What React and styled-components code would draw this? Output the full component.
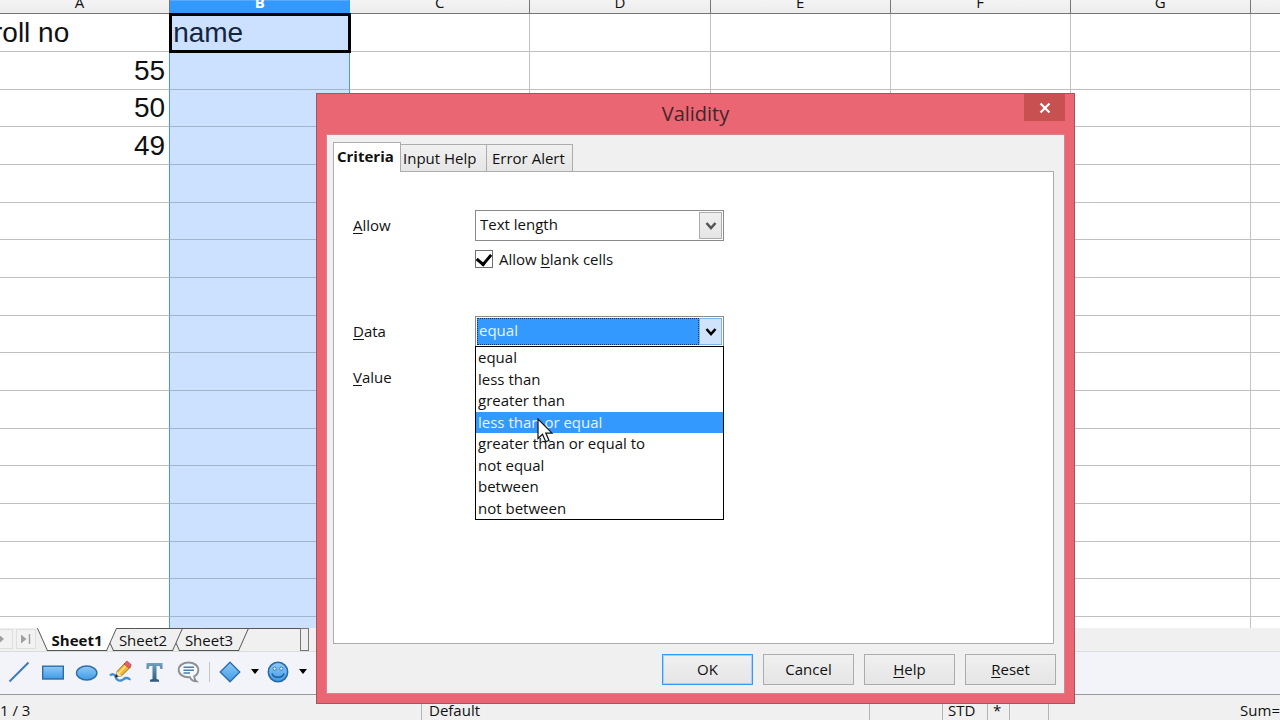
import React, { useState } from "react";
import styled, { createGlobalStyle, css } from "styled-components";

const columns = ["A", "B", "C", "D", "E", "F", "G", "H"];

const rows = [
  ["roll no", "name"],
  [55],
  [50],
  [49],
  ...Array.from({ length: 13 }, () => []),
];

const sheets = ["Sheet1", "Sheet2", "Sheet3"];

const tabs = ["Criteria", "Input Help", "Error Alert"];

const conditions = [
  "equal",
  "less than",
  "greater than",
  "less than or equal",
  "greater than or equal to",
  "not equal",
  "between",
  "not between",
];

const App = () => {
  return (
    <StPage>
      <GlobalStyle />
      <Spreadsheet />
      <SheetBar />
      <DrawingBar />
      <StatusBar />
      <ValidityDialog />
    </StPage>
  );
};

export default App;

const Spreadsheet = () => (
  <StSheet>
    <StTable>
      <thead>
        <tr>
          {columns.map((name) => (
            <StHead key={name} $selected={name === "B"}>
              <div>{name}</div>
            </StHead>
          ))}
        </tr>
      </thead>
      <tbody>
        {rows.map((row, rowIndex) => (
          <StRow key={rowIndex}>
            {columns.map((name, index) => (
              <StCell
                key={name}
                $selected={name === "B"}
                $beforeSelected={name === "A"}
                $active={name === "B" && rowIndex === 0}
                $number={typeof row[index] === "number"}
              >
                {row[index]}
              </StCell>
            ))}
          </StRow>
        ))}
      </tbody>
    </StTable>
  </StSheet>
);

const SheetBar = () => {
  const [current, setCurrent] = useState("Sheet1");

  return (
    <StSheetBar>
      <StNavButton type="button" aria-label="Next sheet">
        <svg width="16" height="16" viewBox="0 0 16 16">
          <path d="M4 3.5 9 8l-5 4.500z" fill="#a0a0a0" />
        </svg>
      </StNavButton>
      <StNavButton type="button" aria-label="Last sheet">
        <svg width="16" height="16" viewBox="0 0 16 16">
          <path d="M3 3.500 8.500 8 3 12.500z" fill="#a0a0a0" />
          <path d="M11.500 3v10" stroke="#a0a0a0" strokeWidth="1.500" />
        </svg>
      </StNavButton>
      <StSheetTabs>
        {sheets.map((name, index) => (
          <StSheetTab
            key={name}
            type="button"
            $active={name === current}
            $layer={sheets.length - index}
            onClick={() => setCurrent(name)}
          >
            <span>{name}</span>
          </StSheetTab>
        ))}
      </StSheetTabs>
      <StSplitter />
    </StSheetBar>
  );
};

const DrawingBar = () => (
  <StToolbar>
    <svg width="0" height="0" aria-hidden="true">
      <defs>
        <linearGradient id="blue" x1="0" y1="0" x2="0" y2="1">
          <stop offset="0" stopColor="#8fcaf5" />
          <stop offset="1" stopColor="#3f9be6" />
        </linearGradient>
        <linearGradient id="steel" x1="0" y1="0" x2="0" y2="1">
          <stop offset="0" stopColor="#6fa3c0" />
          <stop offset="1" stopColor="#2c5876" />
        </linearGradient>
      </defs>
    </svg>
    <StTool type="button" aria-label="Line">
      <svg width="24" height="24" viewBox="0 0 24 24">
        <path d="M2.500 21.500 21.500 2.500" stroke="#3d7cb4" strokeWidth="2" />
      </svg>
    </StTool>
    <StTool type="button" aria-label="Rectangle">
      <svg width="24" height="24" viewBox="0 0 24 24">
        <rect x="1.700" y="6.200" width="20.600" height="12.800" fill="url(#blue)" stroke="#2d6ca6" strokeWidth="1.400" />
      </svg>
    </StTool>
    <StTool type="button" aria-label="Ellipse">
      <svg width="24" height="24" viewBox="0 0 24 24">
        <ellipse cx="11.700" cy="13" rx="10.200" ry="7" fill="url(#blue)" stroke="#2d6ca6" strokeWidth="1.400" />
      </svg>
    </StTool>
    <StTool type="button" aria-label="Freeform line">
      <svg width="24" height="24" viewBox="0 0 24 24">
        <path d="M1 15.500c2-2 5-1.500 5.500 1s2.500 4.500 5.500 4 2.500-2.500 5.500-2.500 1.500 1.500 4 1" fill="none" stroke="#3d8fd6" strokeWidth="2.400" />
        <path d="m6.500 17 1.500-5.500L16 3l5.500 4.200-9 8.600z" fill="#f4b62c" stroke="#8a5a1c" strokeWidth=".8" />
        <path d="m9.700 13.500 8-8.500" stroke="#ffe48a" strokeWidth="1.800" />
        <path d="m15 4 2-2.200c.6-.6 1.300-.6 2 0l2.700 2.400c.6.6.6 1.300 0 2L19.800 8z" fill="#e4616a" stroke="#a83c46" strokeWidth=".7" />
        <path d="m6.500 17 1.500-5.500 4.500 4.300z" fill="#f3dfba" />
        <path d="m6 17.500 1-3.500 2.500 2.500z" fill="#222" />
      </svg>
    </StTool>
    <StTool type="button" aria-label="Text">
      <svg width="24" height="24" viewBox="0 0 24 24">
        <path d="M3.500 3h16v6h-2l-1-3h-3V19l2.500.7V21.800h-9v-2.100L9.500 19V6h-3l-1 3h-2z" fill="url(#steel)" />
      </svg>
    </StTool>
    <StTool type="button" aria-label="Callout">
      <svg width="24" height="24" viewBox="0 0 24 24">
        <path d="M11.500 2.500c5.700 0 9.800 3.200 9.800 7.400 0 3-1.600 5.200-4.100 6.500 0 1.800.8 3.600 2.300 5-3-.2-5.600-1.700-6.500-4.200h-1.500c-5.700 0-9.800-3.100-9.800-7.300s4.100-7.400 9.800-7.400z" fill="#f6f7f8" stroke="#8c9196" strokeWidth="1.900" />
        <path d="M6.500 7.200h10.500M6.500 10.200h10.500M6.500 13h6.500" stroke="#4a7fb4" strokeWidth="1.500" />
      </svg>
    </StTool>
    <StSeparator />
    <StTool type="button" aria-label="Basic shapes">
      <svg width="24" height="24" viewBox="0 0 24 24">
        <path d="M12 2.200 21.800 12 12 21.800 2.200 12z" fill="url(#blue)" stroke="#2d6ca6" strokeWidth="1.300" />
      </svg>
    </StTool>
    <StArrow type="button" aria-label="More basic shapes">
      <Triangle />
    </StArrow>
    <StTool type="button" aria-label="Symbol shapes">
      <svg width="24" height="24" viewBox="0 0 24 24">
        <circle cx="12" cy="12" r="9.700" fill="url(#blue)" stroke="#2468a8" strokeWidth="1.500" />
        <circle cx="8.700" cy="8.700" r="1.600" fill="#e4f3fd" stroke="#2468a8" strokeWidth=".8" />
        <circle cx="15.300" cy="8.700" r="1.600" fill="#e4f3fd" stroke="#2468a8" strokeWidth=".8" />
        <path d="M6 13.500c1.500 5 10.500 5 12 0" fill="none" stroke="#1d5c9a" strokeWidth="1.500" />
      </svg>
    </StTool>
    <StArrow type="button" aria-label="More symbol shapes">
      <Triangle />
    </StArrow>
  </StToolbar>
);

const StatusBar = () => (
  <StStatus>
    <StStatusItem $width={421}>1 / 3</StStatusItem>
    <StStatusItem $grow>Default</StStatusItem>
    <StStatusItem $width={73} />
    <StStatusItem $width={45}>STD</StStatusItem>
    <StStatusItem $width={22}>*</StStatusItem>
    <StStatusItem $width={39} />
    <StStatusItem $width={232} $right>
      Sum=
    </StStatusItem>
  </StStatus>
);

const ValidityDialog = () => {
  const [tab, setTab] = useState("Criteria");
  const [allow, setAllow] = useState("Text length");
  const [blank, setBlank] = useState(true);
  const [data, setData] = useState("equal");

  return (
    <StDialog role="dialog" aria-labelledby="dialog-title">
      <StTitle>
        <h1 id="dialog-title">Validity</h1>
        <StClose type="button" aria-label="Close">
          <svg width="12" height="12" viewBox="0 0 12 12">
            <path d="m1.500 1.500 9 9m0-9-9 9" stroke="#fff" strokeWidth="2.200" />
          </svg>
        </StClose>
      </StTitle>
      <StContent>
        <StTabs role="tablist">
          {tabs.map((name) => (
            <StTab
              key={name}
              type="button"
              role="tab"
              aria-selected={name === tab}
              $active={name === tab}
              onClick={() => setTab(name)}
            >
              {name}
            </StTab>
          ))}
        </StTabs>
        <StPanel role="tabpanel">
          <StField>
            <label htmlFor="allow">
              <u>A</u>llow
            </label>
            <StSelectBox>
              <StSelect id="allow" value={allow} onChange={(event) => setAllow(event.target.value)}>
                <option>Text length</option>
              </StSelect>
              <StSelectArrow>
                <Chevron color="#555" />
              </StSelectArrow>
            </StSelectBox>
          </StField>
          <StCheckField>
            <StCheckbox
              id="blank"
              type="checkbox"
              checked={blank}
              onChange={(event) => setBlank(event.target.checked)}
            />
            <label htmlFor="blank">
              Allow <u>b</u>lank cells
            </label>
          </StCheckField>
          <StField>
            <label htmlFor="data">
              <u>D</u>ata
            </label>
            <StSelectBox>
              <StSelect id="data" $open value={data} onChange={(event) => setData(event.target.value)}>
                {conditions.map((name) => (
                  <option key={name}>{name}</option>
                ))}
              </StSelect>
              <StSelectArrow $open>
                <Chevron color="#000" />
              </StSelectArrow>
              <StList role="listbox">
                {conditions.map((name) => (
                  <StOption
                    key={name}
                    role="option"
                    aria-selected={name === data}
                    $hover={name === "less than or equal"}
                    onClick={() => setData(name)}
                  >
                    {name}
                  </StOption>
                ))}
              </StList>
            </StSelectBox>
          </StField>
          <StField>
            <label htmlFor="value">
              <u>V</u>alue
            </label>
            <StInput id="value" type="text" />
          </StField>
        </StPanel>
        <StButtons>
          <StButton type="button" $primary>
            OK
          </StButton>
          <StButton type="button">Cancel</StButton>
          <StButton type="button">
            <u>H</u>elp
          </StButton>
          <StButton type="button">
            <u>R</u>eset
          </StButton>
        </StButtons>
      </StContent>
      <StCursor width="18" height="26" viewBox="0 0 18 26">
        <path d="M1 1v19.500l4.500-4.200 3.200 7.500 3.300-1.400-3.200-7.300H15z" fill="#fff" stroke="#111" strokeWidth="1.200" />
      </StCursor>
    </StDialog>
  );
};

const Chevron = ({ color }) => (
  <svg width="12" height="10" viewBox="0 0 12 10">
    <path d="m1.500 2 4.500 5 4.500-5" fill="none" stroke={color} strokeWidth="2.600" />
  </svg>
);

const Triangle = () => (
  <svg width="8" height="5" viewBox="0 0 8 5">
    <path d="M0 0h8L4 5z" fill="#000" />
  </svg>
);

const GlobalStyle = createGlobalStyle`
  * {
    box-sizing: border-box;
  }

  body {
    margin: 0;
    color: #111;
    font-family: "Open Sans", "Noto Sans", sans-serif;
    font-size: 15px;
    line-height: 20px;
  }

  button, input, select {
    font: inherit;
    color: inherit;
  }

  u {
    text-underline-offset: 2px;
  }
`;

const StPage = styled.div`
  position: relative;
  display: flex;
  flex-direction: column;
  height: 100vh;
  overflow: hidden;
  background: #fff;
`;

const StSheet = styled.div`
  flex: 1;
  min-height: 0;
  overflow: hidden;
`;

/* the first column is scrolled partly out of view */
const StTable = styled.table`
  table-layout: fixed;
  width: 1441px;
  margin-left: -10px;
  border-collapse: separate;
  border-spacing: 0;
`;

const StHead = styled.th`
  height: 14px;
  padding: 0;
  border-right: 1px solid #777;
  border-bottom: 1px solid #777;
  background: linear-gradient(#f4f4f4, #ececec);
  font-weight: 400;

  div {
    display: flex;
    align-items: flex-end;
    justify-content: center;
    height: 13px;
    padding-bottom: 1px;
    overflow: hidden;
  }

  ${({ $selected }) =>
    $selected &&
    css`
      background: linear-gradient(#5aa9f8 10%, #3399ff 10%);
      border-right-color: #3399ff;
      color: #fff;
      font-weight: 700;
    `}
`;

const StRow = styled.tr`
  height: 38px;

  &:nth-child(3n) {
    height: 37px;
  }
`;

const StCell = styled.td`
  padding: 0 4px 0 3px;
  border-right: 1px solid #c4c4c4;
  border-bottom: 1px solid #c0c0c0;
  font-family: "Liberation Sans", Arial, sans-serif;
  font-size: 28px;
  line-height: 32px;
  text-align: ${({ $number }) => ($number ? "right" : "left")};
  white-space: nowrap;

  ${({ $beforeSelected }) =>
    $beforeSelected &&
    css`
      border-right-color: #4a98dc;
    `}

  ${({ $selected }) =>
    $selected &&
    css`
      border-right-color: #4a98dc;
      border-bottom-color: #a3b4cb;
      background: #cce1ff;
      color: #13253f;
    `}

  ${({ $active }) =>
    $active &&
    css`
      outline: 3px solid #000;
      outline-offset: -2px;
    `}
`;

const StSheetBar = styled.div`
  display: flex;
  height: 24px;
  border-bottom: 1px solid #dcdcdc;
  background: #f0f0f0;
`;

const StNavButton = styled.button`
  display: flex;
  align-items: center;
  justify-content: center;
  width: 20px;
  height: 20px;
  margin: 1px 1px 0 0;
  padding: 0;
  border: 1px solid #dedede;
  background: #f2f2f2;

  &:first-child {
    margin-right: 3px;
    margin-left: -7px;
  }
`;

const StSheetTabs = styled.div`
  display: flex;
  width: 263px;
  height: 23px;
  background: linear-gradient(#555, #555) right top / 184px 1px no-repeat;
`;

/* slanted sides: two halves skewed in opposite directions, overlapping in the middle */
const StSheetTab = styled.button`
  position: relative;
  width: 80px;
  height: 23px;
  margin-right: -14px;
  padding: 0;
  border: 0;
  background: none;
  z-index: ${({ $active, $layer }) => ($active ? 9 : $layer)};
  font-weight: ${({ $active }) => ($active ? 700 : 400)};

  span {
    position: relative;
    z-index: 1;
  }

  &::before,
  &::after {
    content: "";
    position: absolute;
    top: 0;
    bottom: 0;
    border: 0 solid #555;
    border-bottom-width: 1px;
    border-top-width: ${({ $active }) => ($active ? 0 : 1)}px;
    background: ${({ $active }) => ($active ? "#fff" : "#f0f0f0")};
  }

  &::before {
    left: 5px;
    right: 35%;
    border-left-width: 1px;
    transform: skewX(24deg);
  }

  &::after {
    left: 35%;
    right: 5px;
    border-right-width: 1px;
    transform: skewX(-24deg);
  }
`;

const StSplitter = styled.div`
  width: 9px;
  height: 23px;
  border: 1px solid #777;
  background: #eee;
`;

const StToolbar = styled.div`
  display: flex;
  align-items: center;
  gap: 10px;
  height: 43px;
  padding: 0 7px 3px;
  border-bottom: 1px solid #999;
  background: #f2f4f9;

  > svg {
    position: absolute;
  }
`;

const StTool = styled.button`
  display: flex;
  width: 24px;
  height: 24px;
  padding: 0;
  border: 0;
  background: none;
`;

const StSeparator = styled.div`
  width: 1px;
  height: 20px;
  background: #c4c6ca;
  margin: 0 -2px;
`;

const StArrow = styled(StTool)`
  align-items: center;
  width: 8px;
  margin: 0 -3px 0 -1px;
`;

const StStatus = styled.div`
  display: flex;
  height: 25px;
  background: #f0f0f0;
`;

const StStatusItem = styled.div`
  flex: ${({ $grow, $width }) => ($grow ? "1 1 0" : `0 0 ${$width}px`)};
  padding: 5px 0 0 7px;
  border-left: 1px solid #b4b4b4;
  white-space: nowrap;
  overflow: hidden;

  &:first-child {
    padding-left: 0;
    border-left: 0;
  }

  ${({ $right }) =>
    $right &&
    css`
      text-align: right;
    `}

  &:nth-child(4),
  &:nth-child(5) {
    padding-left: 5px;
  }
`;

const StDialog = styled.div`
  position: absolute;
  top: 93px;
  left: 316px;
  width: 759px;
  padding: 0 9px 9px;
  border: 1px solid #a8525c;
  background: #ea6672;
  z-index: 3;
`;

const StTitle = styled.div`
  position: relative;
  display: flex;
  justify-content: center;
  height: 40px;

  h1 {
    margin: 0;
    color: #42242a;
    font-size: 20px;
    font-weight: 400;
    line-height: 40px;
  }
`;

const StClose = styled.button`
  position: absolute;
  top: 0;
  right: 0;
  display: flex;
  align-items: center;
  justify-content: center;
  width: 41px;
  height: 27px;
  padding: 0;
  border: 0;
  background: #c75050;
`;

const StContent = styled.div`
  padding: 6px 8px 7px 6px;
  border: 1px solid #d9848b;
  background: #f0f0f0;
`;

const StTabs = styled.div`
  display: flex;
  align-items: flex-end;
  height: 30px;
`;

const StTab = styled.button`
  width: 86px;
  height: 27px;
  padding: 0 0 1px 5px;
  border: 1px solid #acacac;
  border-left-width: 0;
  border-bottom: 0;
  background: linear-gradient(#f0f0f0, #e6e6e6);
  text-align: left;
  white-space: nowrap;

  &:nth-child(2) {
    padding-left: 2px;
  }

  ${({ $active }) =>
    $active &&
    css`
      position: relative;
      width: 68px;
      height: 30px;
      margin-bottom: -1px;
      padding: 0 0 3px 3px;
      border-left-width: 1px;
      background: #fff;
      font-weight: 700;
    `}
`;

const StPanel = styled.div`
  height: 473px;
  margin-right: 2px;
  padding: 38px 19px;
  border: 1px solid #acacac;
  background: #fff;
`;

const StField = styled.div`
  display: grid;
  grid-template-columns: 122px 249px;
  align-items: center;
  margin-bottom: 15px;

  label {
    padding-bottom: 2px;
  }
`;

const StSelectBox = styled.div`
  position: relative;
  display: flex;
  height: 31px;
  padding: 1px;
  border: 1px solid #8a8a8a;
  background: #fff;
`;

const StSelect = styled.select`
  flex: 1;
  min-width: 0;
  padding: 0 3px 3px;
  border: 0;
  border-radius: 0;
  outline: 0;
  appearance: none;
  background: #fff;

  ${({ $open }) =>
    $open &&
    css`
      padding: 0 1px 3px;
      border: 1px dotted #10304f;
      background: #3399ff;
      color: #e8f3ff;
    `}
`;

const StSelectArrow = styled.span`
  display: flex;
  align-items: center;
  justify-content: center;
  width: 23px;
  border: 1px solid ${({ $open }) => ($open ? "#7eb4ea" : "#acacac")};
  background: ${({ $open }) => ($open ? "#cfe4fa" : "linear-gradient(#f0f0f0, #e5e5e5)")};
  pointer-events: none;
`;

const StList = styled.ul`
  position: absolute;
  top: 29px;
  left: -1px;
  right: -1px;
  margin: 0;
  padding: 0;
  border: 1px solid #000;
  background: #fff;
  list-style: none;
  z-index: 1;
`;

const StOption = styled.li`
  height: 22px;
  padding: 0 2px;
  background: ${({ $hover }) => ($hover ? "#3399ff" : "#fff")};
  color: ${({ $hover }) => ($hover ? "#e8f3ff" : "#111")};

  &:nth-child(even) {
    height: 21px;
  }
`;

const StCheckField = styled.div`
  display: flex;
  align-items: center;
  gap: 6px;
  height: 20px;
  margin: -7px 0 47px 122px;
`;

const StCheckbox = styled.input`
  display: flex;
  align-items: center;
  justify-content: center;
  width: 18px;
  height: 18px;
  margin: 0;
  border: 1px solid #707070;
  appearance: none;
  background: #fff;

  &:checked::after {
    content: "";
    width: 7px;
    height: 11px;
    margin-bottom: 3px;
    border: solid #000;
    border-width: 0 3px 3px 0;
    transform: rotate(40deg);
  }
`;

const StInput = styled.input`
  width: 100%;
  height: 31px;
  padding: 0 3px;
  border: 1px solid #8a8a8a;
`;

const StButtons = styled.div`
  display: flex;
  justify-content: flex-end;
  gap: 10px;
  padding: 10px 0 1px;
`;

const StButton = styled.button`
  width: 91px;
  height: 31px;
  padding: 0 0 2px;
  border: 1px solid #acacac;
  background: linear-gradient(#f0f0f0, #e5e5e5);

  ${({ $primary }) =>
    $primary &&
    css`
      border-color: #3399ff;
      outline: 1px solid #a9d1f8;
      outline-offset: -2px;
    `}
`;

const StCursor = styled.svg`
  position: absolute;
  top: 324px;
  left: 220px;
  z-index: 2;
  pointer-events: none;
`;
